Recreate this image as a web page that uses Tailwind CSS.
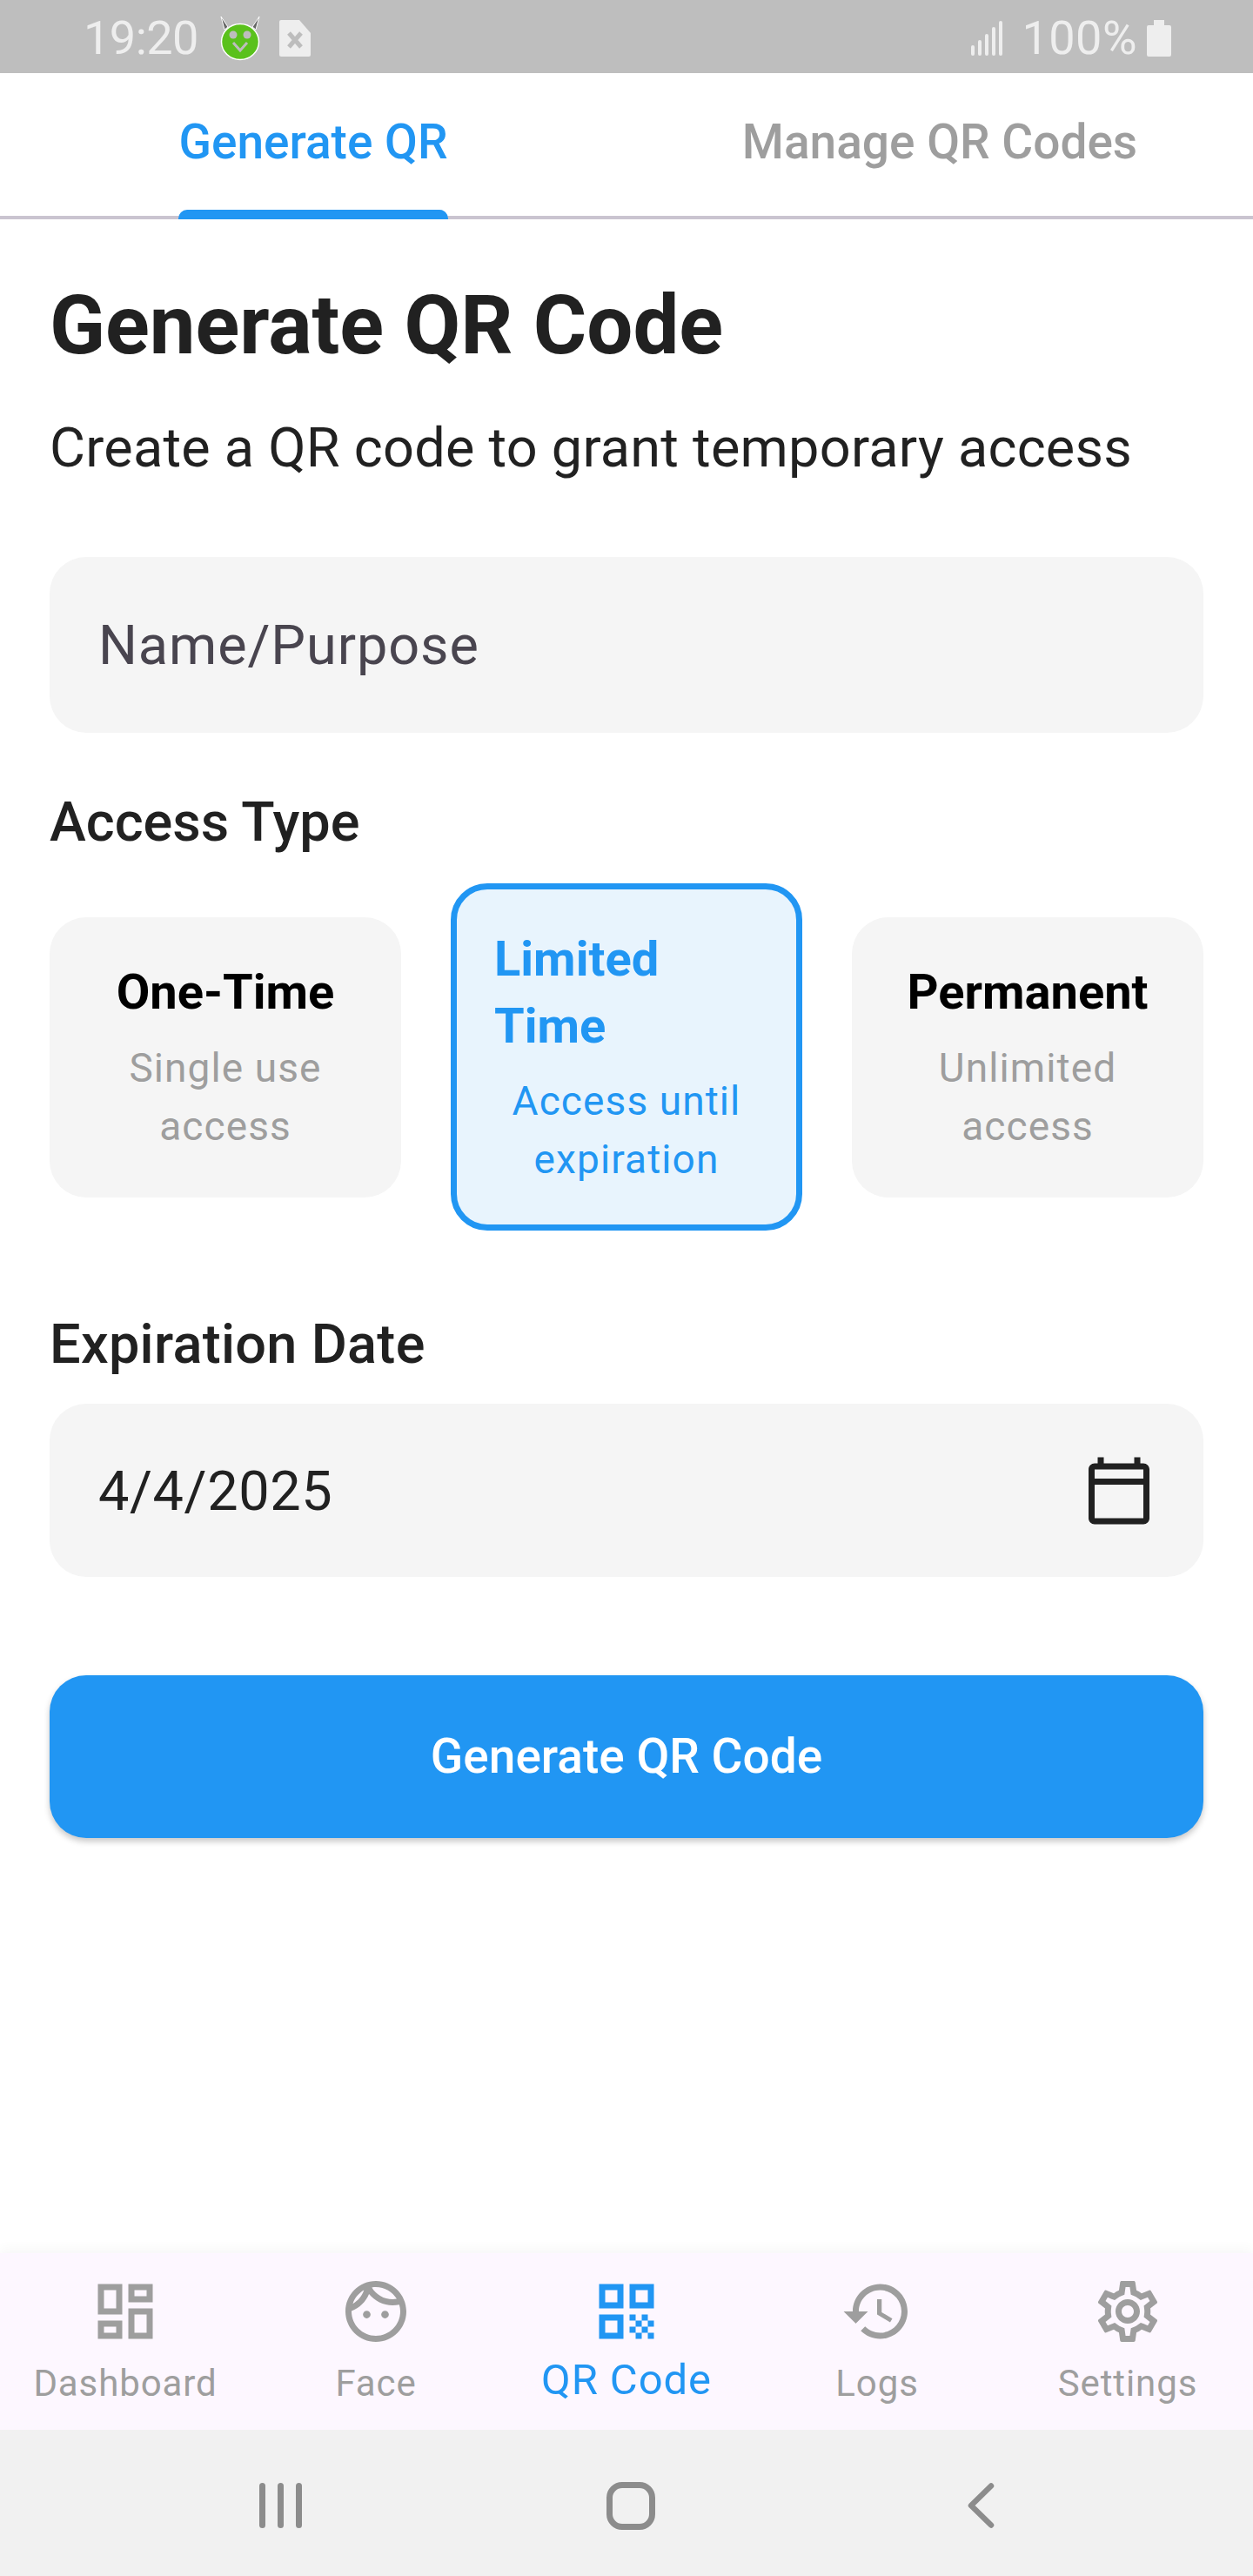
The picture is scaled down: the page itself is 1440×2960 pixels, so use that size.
<!DOCTYPE html>
<html lang="en">
  <head>
    <meta charset="UTF-8" />
    <title>Generate QR Code</title>
    <script src="https://cdn.jsdelivr.net/npm/@tailwindcss/browser@4"></script>
  </head>
  <body class="font-[Roboto,sans-serif] bg-white">
    <div class="w-[1440px] h-[2960px] flex flex-col overflow-hidden">
      <!-- Status bar -->
      <div class="h-[84px] shrink-0 bg-[#bebebe] flex items-center text-[#eeeeee] text-[54px] pt-[3px] relative">
        <span class="ml-[96px] leading-none tracking-[-0.500px]">19:20</span>
        <svg class="ml-[20px] w-[56px] h-[52px]" viewBox="0 0 56 52">
          <path d="M6 1l8 12-4 3zM50 1l-8 12 4 3z" fill="#666" stroke="#fff" stroke-width="1" />
          <ellipse cx="28" cy="30" rx="21.500" ry="20.500" fill="#5ac11c" stroke="#fff" stroke-width="1.500" />
          <circle cx="20" cy="22" r="4.500" fill="#bdbdbd" />
          <circle cx="36" cy="22" r="4.500" fill="#bdbdbd" />
          <path d="M20 31l8 9 8-9" fill="none" stroke="#bdbdbd" stroke-width="3" />
        </svg>
        <svg class="ml-[17px] w-[36px] h-[42px]" viewBox="0 0 36 42">
          <path d="M2 0h21l13 15v25a2 2 0 0 1-2 2H2a2 2 0 0 1-2-2V2a2 2 0 0 1 2-2z" fill="#eeeeee" />
          <path d="M11 15l14 16M25 15L11 31" stroke="#bdbdbd" stroke-width="5" />
        </svg>
        <div class="ml-auto flex items-center mr-[94px]">
          <svg class="w-[36px] h-[40px]" viewBox="0 0 36 40" fill="#eeeeee">
            <rect x="0" y="28" width="4" height="12" rx="2" />
            <rect x="8" y="22" width="4" height="18" rx="2" />
            <rect x="16" y="15" width="4" height="25" rx="2" />
            <rect x="24" y="7" width="4" height="33" rx="2" />
            <rect x="32" y="0" width="4" height="40" rx="2" />
          </svg>
          <span class="ml-[22px] leading-none tracking-[0.500px]">100%</span>
          <svg class="ml-[11px] w-[28px] h-[42px]" viewBox="0 0 28 42" fill="#eeeeee">
            <path d="M8 0h12v6h6a2 2 0 0 1 2 2v32a2 2 0 0 1-2 2H2a2 2 0 0 1-2-2V8a2 2 0 0 1 2-2h6z" />
          </svg>
        </div>
      </div>

      <!-- Tabs -->
      <div class="h-[168px] shrink-0 flex border-b-[4px] border-[#cac4d0]">
        <div class="w-1/2 flex justify-center">
          <div class="relative h-full flex items-center text-[55px] font-medium text-[#2196f3] pb-[5px]">
            Generate QR
            <div class="absolute left-0 right-0 bottom-[-4px] h-[11px] bg-[#2196f3] rounded-t-[10px]"></div>
          </div>
        </div>
        <div class="w-1/2 flex justify-center items-center text-[55px] font-medium text-[#9e9e9e] pb-[5px]">
          Manage QR Codes
        </div>
      </div>

      <!-- Form -->
      <div class="flex-1 px-[57px]">
        <h1 class="mt-[68px] text-[94px] leading-[108px] font-bold text-[#212121]">Generate QR Code</h1>
        <p class="mt-[47px] text-[63px] leading-[80px] tracking-[0.250px] text-[#212121]">Create a QR code to grant temporary access</p>
        <div class="mt-[85px] h-[202px] rounded-[42px] bg-[#f5f5f5] flex items-center px-[56px] pt-[3px] text-[63px] tracking-[0.900px] text-[#49454f]">Name/Purpose</div>
        <h2 class="mt-[70px] text-[63px] leading-[66px] font-medium text-[#212121]">Access Type</h2>

        <div class="mt-[37px] flex items-center justify-between">
          <div class="w-[404px] h-[322px] rounded-[42px] bg-[#f5f5f5] flex flex-col items-center justify-center text-center">
            <div class="text-[56px] leading-[77px] font-bold text-black">One-Time</div>
            <div class="mt-[15px] text-[46px] leading-[67px] tracking-[1.100px] text-[#9e9e9e] w-[300px]">Single use access</div>
          </div>
          <div class="w-[404px] h-[399px] rounded-[42px] border-[7px] border-[#2196f3] bg-[#e8f4fd] flex flex-col items-center justify-center text-center">
            <div class="text-[56px] leading-[77px] font-bold text-[#2196f3] text-left w-[304px]">Limited Time</div>
            <div class="mt-[14px] text-[46px] leading-[67px] tracking-[1.100px] text-[#2196f3] w-[300px]">Access until expiration</div>
          </div>
          <div class="w-[404px] h-[322px] rounded-[42px] bg-[#f5f5f5] flex flex-col items-center justify-center text-center">
            <div class="text-[56px] leading-[77px] font-bold text-black">Permanent</div>
            <div class="mt-[15px] text-[46px] leading-[67px] tracking-[1.100px] text-[#9e9e9e] w-[300px]">Unlimited access</div>
          </div>
        </div>

        <h2 class="mt-[98px] text-[63px] leading-[66px] font-medium tracking-[0.300px] text-[#212121]">Expiration Date</h2>
        <div class="mt-[35px] h-[199px] rounded-[42px] bg-[#f5f5f5] flex items-center justify-between pl-[56px] pr-[55px] text-[63px] tracking-[0.600px] text-[#212121]">
          <span class="pt-[4px]">4/4/2025</span>
          <svg class="w-[84px] h-[84px]" viewBox="0 0 24 24" fill="#212121" fill-rule="evenodd">
            <path d="M20 3h-1V1h-2v2H7V1H5v2H4c-1.100 0-2 .9-2 2v16c0 1.100.9 2 2 2h16c1.100 0 2-.9 2-2V5c0-1.100-.9-2-2-2zm0 2v3H4V5h16zM4 21V10h16v11H4z" />
          </svg>
        </div>
        <button class="mt-[113px] w-full h-[187px] rounded-[42px] bg-[#2196f3] text-white text-[55px] font-medium shadow-[0_4px_7px_rgba(0,0,0,0.22)]">Generate QR Code</button>
      </div>

      <!-- Bottom navigation -->
      <div class="h-[203px] shrink-0 bg-[#fdf7ff] flex shadow-[0_-4px_14px_rgba(0,0,0,0.04)]">
        <div class="w-[288px] flex flex-col items-center pt-[25px] text-[#9e9e9e]">
          <svg class="w-[84px] h-[84px]" viewBox="0 0 24 24" fill="currentColor">
            <path d="M19 5v2h-4V5h4M9 5v6H5V5h4m10 8v6h-4v-6h4M9 17v2H5v-2h4M21 3h-8v6h8V3zM11 3H3v10h8V3zm10 8h-8v10h8V11zm-10 4H3v6h8v-6z" />
          </svg>
          <span class="mt-[16px] text-[42px] leading-[50px] tracking-[0.900px]">Dashboard</span>
        </div>
        <div class="w-[288px] flex flex-col items-center pt-[25px] text-[#9e9e9e]">
          <svg class="w-[84px] h-[84px]" viewBox="0 0 24 24" fill="currentColor">
            <path d="M10.250 13c0 .69-.56 1.250-1.250 1.250S7.750 13.690 7.750 13s.56-1.250 1.250-1.250 1.250.56 1.250 1.250zM15 11.750c-.69 0-1.250.56-1.250 1.250s.56 1.250 1.250 1.250 1.250-.56 1.250-1.250-.56-1.250-1.250-1.250zm7 .25c0 5.520-4.480 10-10 10S2 17.520 2 12 6.480 2 12 2s10 4.480 10 10zM10.660 4.120C12.060 6.440 14.600 8 17.500 8c.46 0 .91-.05 1.340-.12C17.440 5.560 14.900 4 12 4c-.46 0-.91.05-1.340.12zM4.420 9.470c1.710-.97 3.030-2.550 3.660-4.440C6.370 6 5.050 7.580 4.420 9.470zM20 12c0-.78-.12-1.530-.33-2.240-.7.15-1.420.24-2.170.24-3.130 0-5.920-1.440-7.760-3.690C8.690 8.870 6.600 10.880 4 11.860c.01.04 0 .09 0 .14 0 4.410 3.590 8 8 8s8-3.590 8-8z" />
          </svg>
          <span class="mt-[16px] text-[42px] leading-[50px] tracking-[0.900px]">Face</span>
        </div>
        <div class="w-[288px] flex flex-col items-center pt-[25px] text-[#2196f3]">
          <svg class="w-[84px] h-[84px]" viewBox="0 0 24 24" fill="currentColor">
            <path d="M3 11h8V3H3v8zm2-6h4v4H5V5zM3 21h8v-8H3v8zm2-6h4v4H5v-4zM13 3v8h8V3h-8zm6 6h-4V5h4v4zM19 19h2v2h-2zM13 13h2v2h-2zM15 15h2v2h-2zM13 17h2v2h-2zM15 19h2v2h-2zM17 17h2v2h-2zM17 13h2v2h-2zM19 15h2v2h-2z" />
          </svg>
          <span class="mt-[11px] text-[49px] leading-[52px] tracking-[0.900px]">QR Code</span>
        </div>
        <div class="w-[288px] flex flex-col items-center pt-[25px] text-[#9e9e9e]">
          <svg class="w-[84px] h-[84px]" viewBox="0 0 24 24" fill="currentColor">
            <path d="M13 3c-4.970 0-9 4.030-9 9H1l3.890 3.890.07.14L9 12H6c0-3.870 3.130-7 7-7s7 3.130 7 7-3.130 7-7 7c-1.930 0-3.680-.79-4.940-2.060l-1.420 1.420C8.270 19.990 10.510 21 13 21c4.970 0 9-4.030 9-9s-4.030-9-9-9zm-1 5v5l4.280 2.540.72-1.210-3.500-2.080V8H12z" />
          </svg>
          <span class="mt-[16px] text-[42px] leading-[50px] tracking-[0.900px]">Logs</span>
        </div>
        <div class="w-[288px] flex flex-col items-center pt-[25px] text-[#9e9e9e]">
          <svg class="w-[84px] h-[84px]" viewBox="0 0 24 24" fill="currentColor">
            <path d="M19.430 12.980c.04-.32.07-.64.07-.98 0-.34-.03-.66-.07-.98l2.110-1.650c.19-.15.24-.42.12-.64l-2-3.460c-.09-.16-.26-.25-.44-.25-.06 0-.12.01-.17.03l-2.490 1c-.52-.4-1.080-.73-1.690-.98l-.38-2.650C14.460 2.180 14.250 2 14 2h-4c-.25 0-.46.18-.49.42l-.38 2.650c-.61.25-1.170.59-1.690.98l-2.490-1c-.06-.02-.12-.03-.18-.03-.17 0-.34.09-.43.25l-2 3.460c-.13.22-.07.49.12.64l2.110 1.650c-.04.32-.07.65-.07.98 0 .33.03.66.07.98l-2.110 1.650c-.19.15-.24.42-.12.64l2 3.460c.09.16.26.25.44.25.06 0 .12-.01.17-.03l2.490-1c.52.4 1.080.73 1.690.98l.38 2.650c.03.24.24.42.49.42h4c.25 0 .46-.18.49-.42l.38-2.650c.61-.25 1.170-.59 1.690-.98l2.490 1c.06.02.12.03.18.03.17 0 .34-.09.43-.25l2-3.460c.12-.22.07-.49-.12-.64l-2.110-1.650zm-1.980-1.710c.04.31.05.52.05.73 0 .21-.02.43-.05.73l-.14 1.130.89.7 1.080.84-.7 1.210-1.270-.51-1.040-.42-.9.68c-.43.32-.84.56-1.250.73l-1.060.43-.16 1.130-.2 1.350h-1.400l-.19-1.350-.16-1.130-1.060-.43c-.43-.18-.83-.41-1.230-.71l-.91-.7-1.060.43-1.270.51-.7-1.210 1.080-.84.89-.7-.14-1.130c-.03-.31-.05-.54-.05-.74s.02-.43.05-.73l.14-1.130-.89-.7-1.080-.84.7-1.210 1.270.51 1.040.42.9-.68c.43-.32.84-.56 1.250-.73l1.060-.43.16-1.130.2-1.350h1.390l.19 1.350.16 1.130 1.060.43c.43.18.83.41 1.230.71l.91.7 1.060-.43 1.270-.51.7 1.210-1.070.85-.89.7.14 1.130zM12 8c-2.210 0-4 1.790-4 4s1.790 4 4 4 4-1.790 4-4-1.790-4-4-4zm0 6c-1.100 0-2-.9-2-2s.9-2 2-2 2 .9 2 2-.9 2-2 2z" />
          </svg>
          <span class="mt-[16px] text-[42px] leading-[50px] tracking-[0.900px]">Settings</span>
        </div>
      </div>

      <!-- System navigation -->
      <div class="h-[168px] shrink-0 bg-[#f1f1f1] relative">
        <div class="absolute left-[298px] top-[61px] flex gap-[14px]">
          <div class="w-[7px] h-[52px] rounded-full bg-[#8c8c8c]"></div>
          <div class="w-[7px] h-[52px] rounded-full bg-[#8c8c8c]"></div>
          <div class="w-[7px] h-[52px] rounded-full bg-[#8c8c8c]"></div>
        </div>
        <div class="absolute left-[697px] top-[60px] w-[56px] h-[55px] rounded-[18px] border-[7px] border-[#8c8c8c]"></div>
        <svg class="absolute left-[1110px] top-[58px] w-[36px] h-[58px]" viewBox="0 0 36 58" fill="none">
          <path d="M29 6.500L6 29l23 22.500" stroke="#8c8c8c" stroke-width="6.500" stroke-linecap="round" stroke-linejoin="round" />
        </svg>
      </div>
    </div>
  </body>
</html>
